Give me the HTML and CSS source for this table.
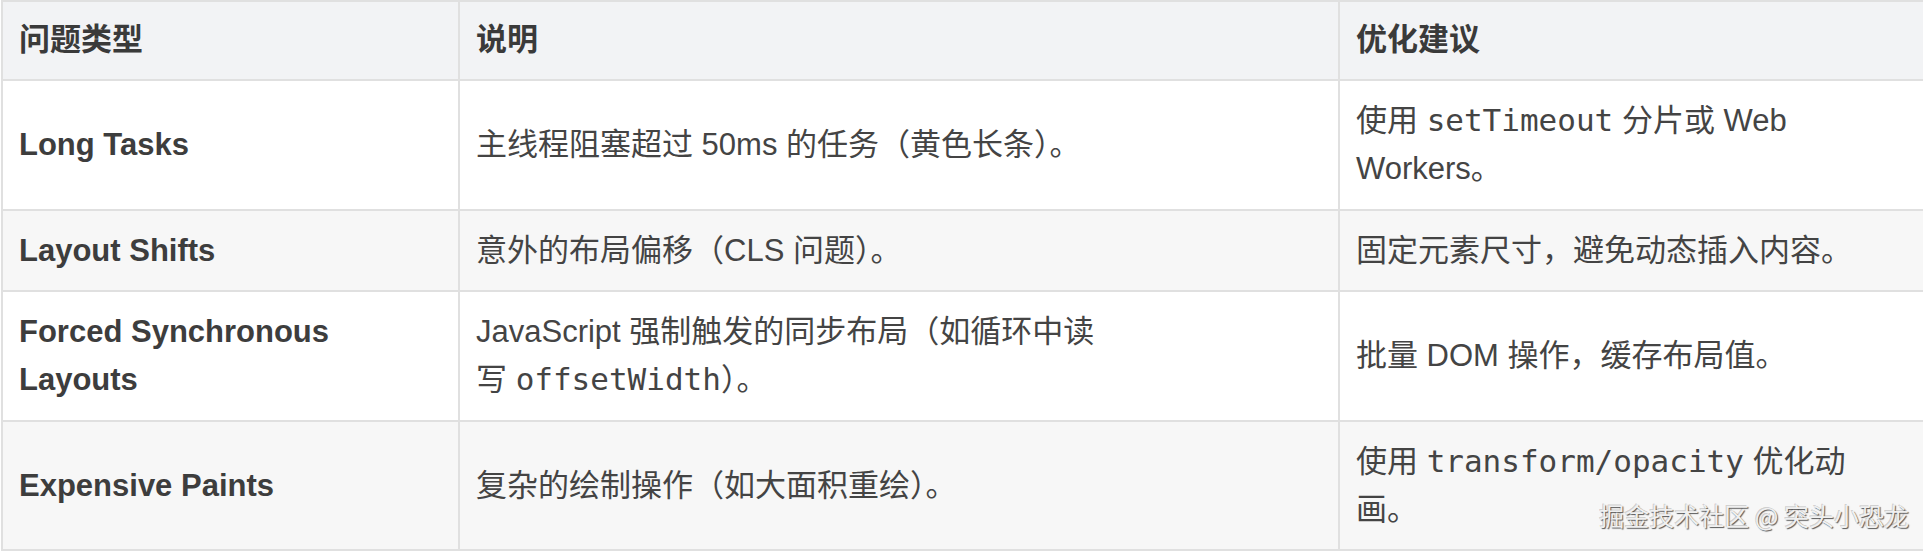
FILE: index.html
```html
<!DOCTYPE html>
<html lang="zh-CN">
<head>
<meta charset="utf-8">
<title>性能问题类型</title>
<link rel="stylesheet" href="styles.css">
</head>
<body>
<div class="wrap">
  <table class="perf-table">
    <colgroup>
      <col class="c1">
      <col class="c2">
      <col class="c3">
    </colgroup>
    <thead>
      <tr>
        <th>问题类型</th>
        <th>说明</th>
        <th>优化建议</th>
      </tr>
    </thead>
    <tbody>
      <tr>
        <td><strong>Long Tasks</strong></td>
        <td>主线程阻塞超过 50ms 的任务（黄色长条）。</td>
        <td>使用 <code>setTimeout</code> 分片或 Web Workers。</td>
      </tr>
      <tr>
        <td><strong>Layout Shifts</strong></td>
        <td>意外的布局偏移（CLS 问题）。</td>
        <td>固定元素尺寸，避免动态插入内容。</td>
      </tr>
      <tr>
        <td><strong>Forced Synchronous Layouts</strong></td>
        <td>JavaScript 强制触发的同步布局（如循环中读<br>写 <code>offsetWidth</code>）。</td>
        <td>批量 DOM 操作，缓存布局值。</td>
      </tr>
      <tr>
        <td><strong>Expensive Paints</strong></td>
        <td>复杂的绘制操作（如大面积重绘）。</td>
        <td>使用 <code>transform/opacity</code> 优化动画。</td>
      </tr>
    </tbody>
  </table>
  <div class="watermark">掘金技术社区 @ 突头小恐龙</div>
</div>
</body>
</html>
```

FILE: styles.css
```css
html, body {
  margin: 0;
  padding: 0;
  background: #ffffff;
}

body {
  padding-left: 1px;
  font-family: "Liberation Sans", "Noto Sans CJK SC", sans-serif;
  font-size: 31px;
  color: #444444;
}

.wrap {
  position: relative;
  width: 1922px;
  height: 552px;
  overflow: hidden;
}

.perf-table {
  width: 1922px;
  border-collapse: collapse;
  table-layout: fixed;
}

.c1 { width: 457px; }
.c2 { width: 880px; }
.c3 { width: 585px; }

.perf-table th,
.perf-table td {
  border: 2px solid #e0e0e0;
  padding: 16px 16px 15.5px;
  line-height: 48px;
  text-align: left;
  vertical-align: middle;
}

.perf-table th {
  background: #f2f3f5;
  font-weight: 700;
  color: #3a3a3a;
  padding-top: 14px;
  padding-bottom: 15px;
}

.perf-table tbody tr:nth-child(even) td {
  background: #f7f7f7;
}

.perf-table strong {
  font-weight: 700;
  color: #3d3d3d;
}

.perf-table code {
  font-family: "DejaVu Sans Mono", "Liberation Mono", monospace;
  font-size: 31px;
  line-height: 1;
}

.watermark {
  position: absolute;
  right: 14px;
  bottom: 22px;
  font-family: "Noto Sans CJK SC", sans-serif;
  font-size: 25px;
  line-height: 30px;
  color: #f0f0f0;
  text-shadow: 1px 1px 1px rgba(0, 0, 0, 0.65), -1px -1px 0 rgba(0, 0, 0, 0.18);
}
```
